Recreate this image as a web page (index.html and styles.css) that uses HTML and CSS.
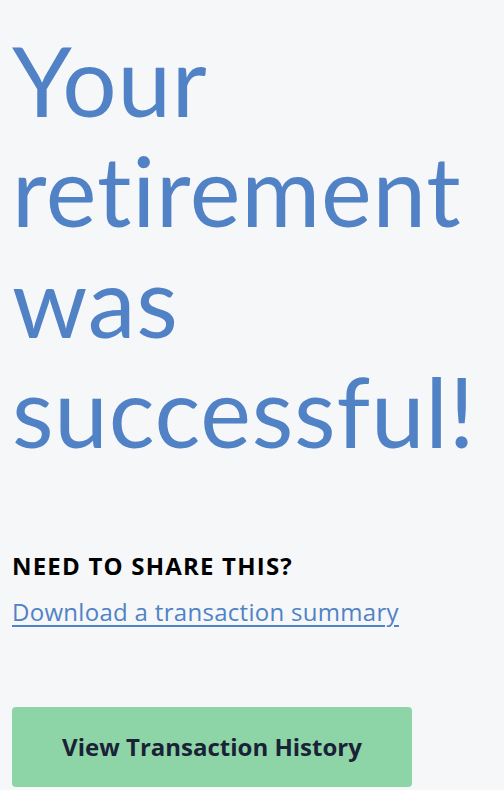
FILE: index.html
```html
<!DOCTYPE html>
<html lang="en">
<head>
<meta charset="utf-8">
<title>Retirement successful</title>
<link rel="stylesheet" href="styles.css">
</head>
<body>
<main class="page">
  <h1 class="title">Your retirement was successful!</h1>
  <section class="share">
    <h2 class="share-heading">NEED TO SHARE THIS?</h2>
    <a class="share-link" href="#">Download a transaction summary</a>
  </section>
  <button class="history-btn" type="button">View Transaction History</button>
</main>
</body>
</html>
```

FILE: styles.css
```css
html, body {
  margin: 0;
  padding: 0;
  background: #f5f7f9;
}
body {
  font-family: "Open Sans", "Noto Sans", sans-serif;
}
.page {
  display: flex;
  flex-direction: column;
  align-items: flex-start;
  padding: 25px 12px 0;
  width: 480px;
}
.title {
  margin: 0;
  font-family: Lato, "Open Sans", sans-serif;
  font-size: 96px;
  font-weight: 400;
  letter-spacing: 0.8px;
  line-height: 110.4px;
  color: #5182c6;
}
.share {
  display: flex;
  flex-direction: column;
  align-items: flex-start;
  margin-top: 84px;
}
.share-heading {
  margin: 0;
  font-size: 24px;
  font-weight: 700;
  letter-spacing: 1.2px;
  color: #000;
  line-height: 30px;
}
.share-link {
  margin-top: 16px;
  font-size: 24px;
  letter-spacing: 0.3px;
  color: #5182c6;
  line-height: 30px;
  text-decoration: underline;
  text-decoration-thickness: 2px;
  text-underline-offset: 4px;
}
.history-btn {
  margin-top: 80px;
  width: 400px;
  height: 80px;
  padding: 0;
  border: 0;
  border-radius: 4px;
  background: #8dd5a6;
  color: #1a2238;
  font-family: inherit;
  font-size: 24px;
  font-weight: 700;
  cursor: pointer;
}
```
